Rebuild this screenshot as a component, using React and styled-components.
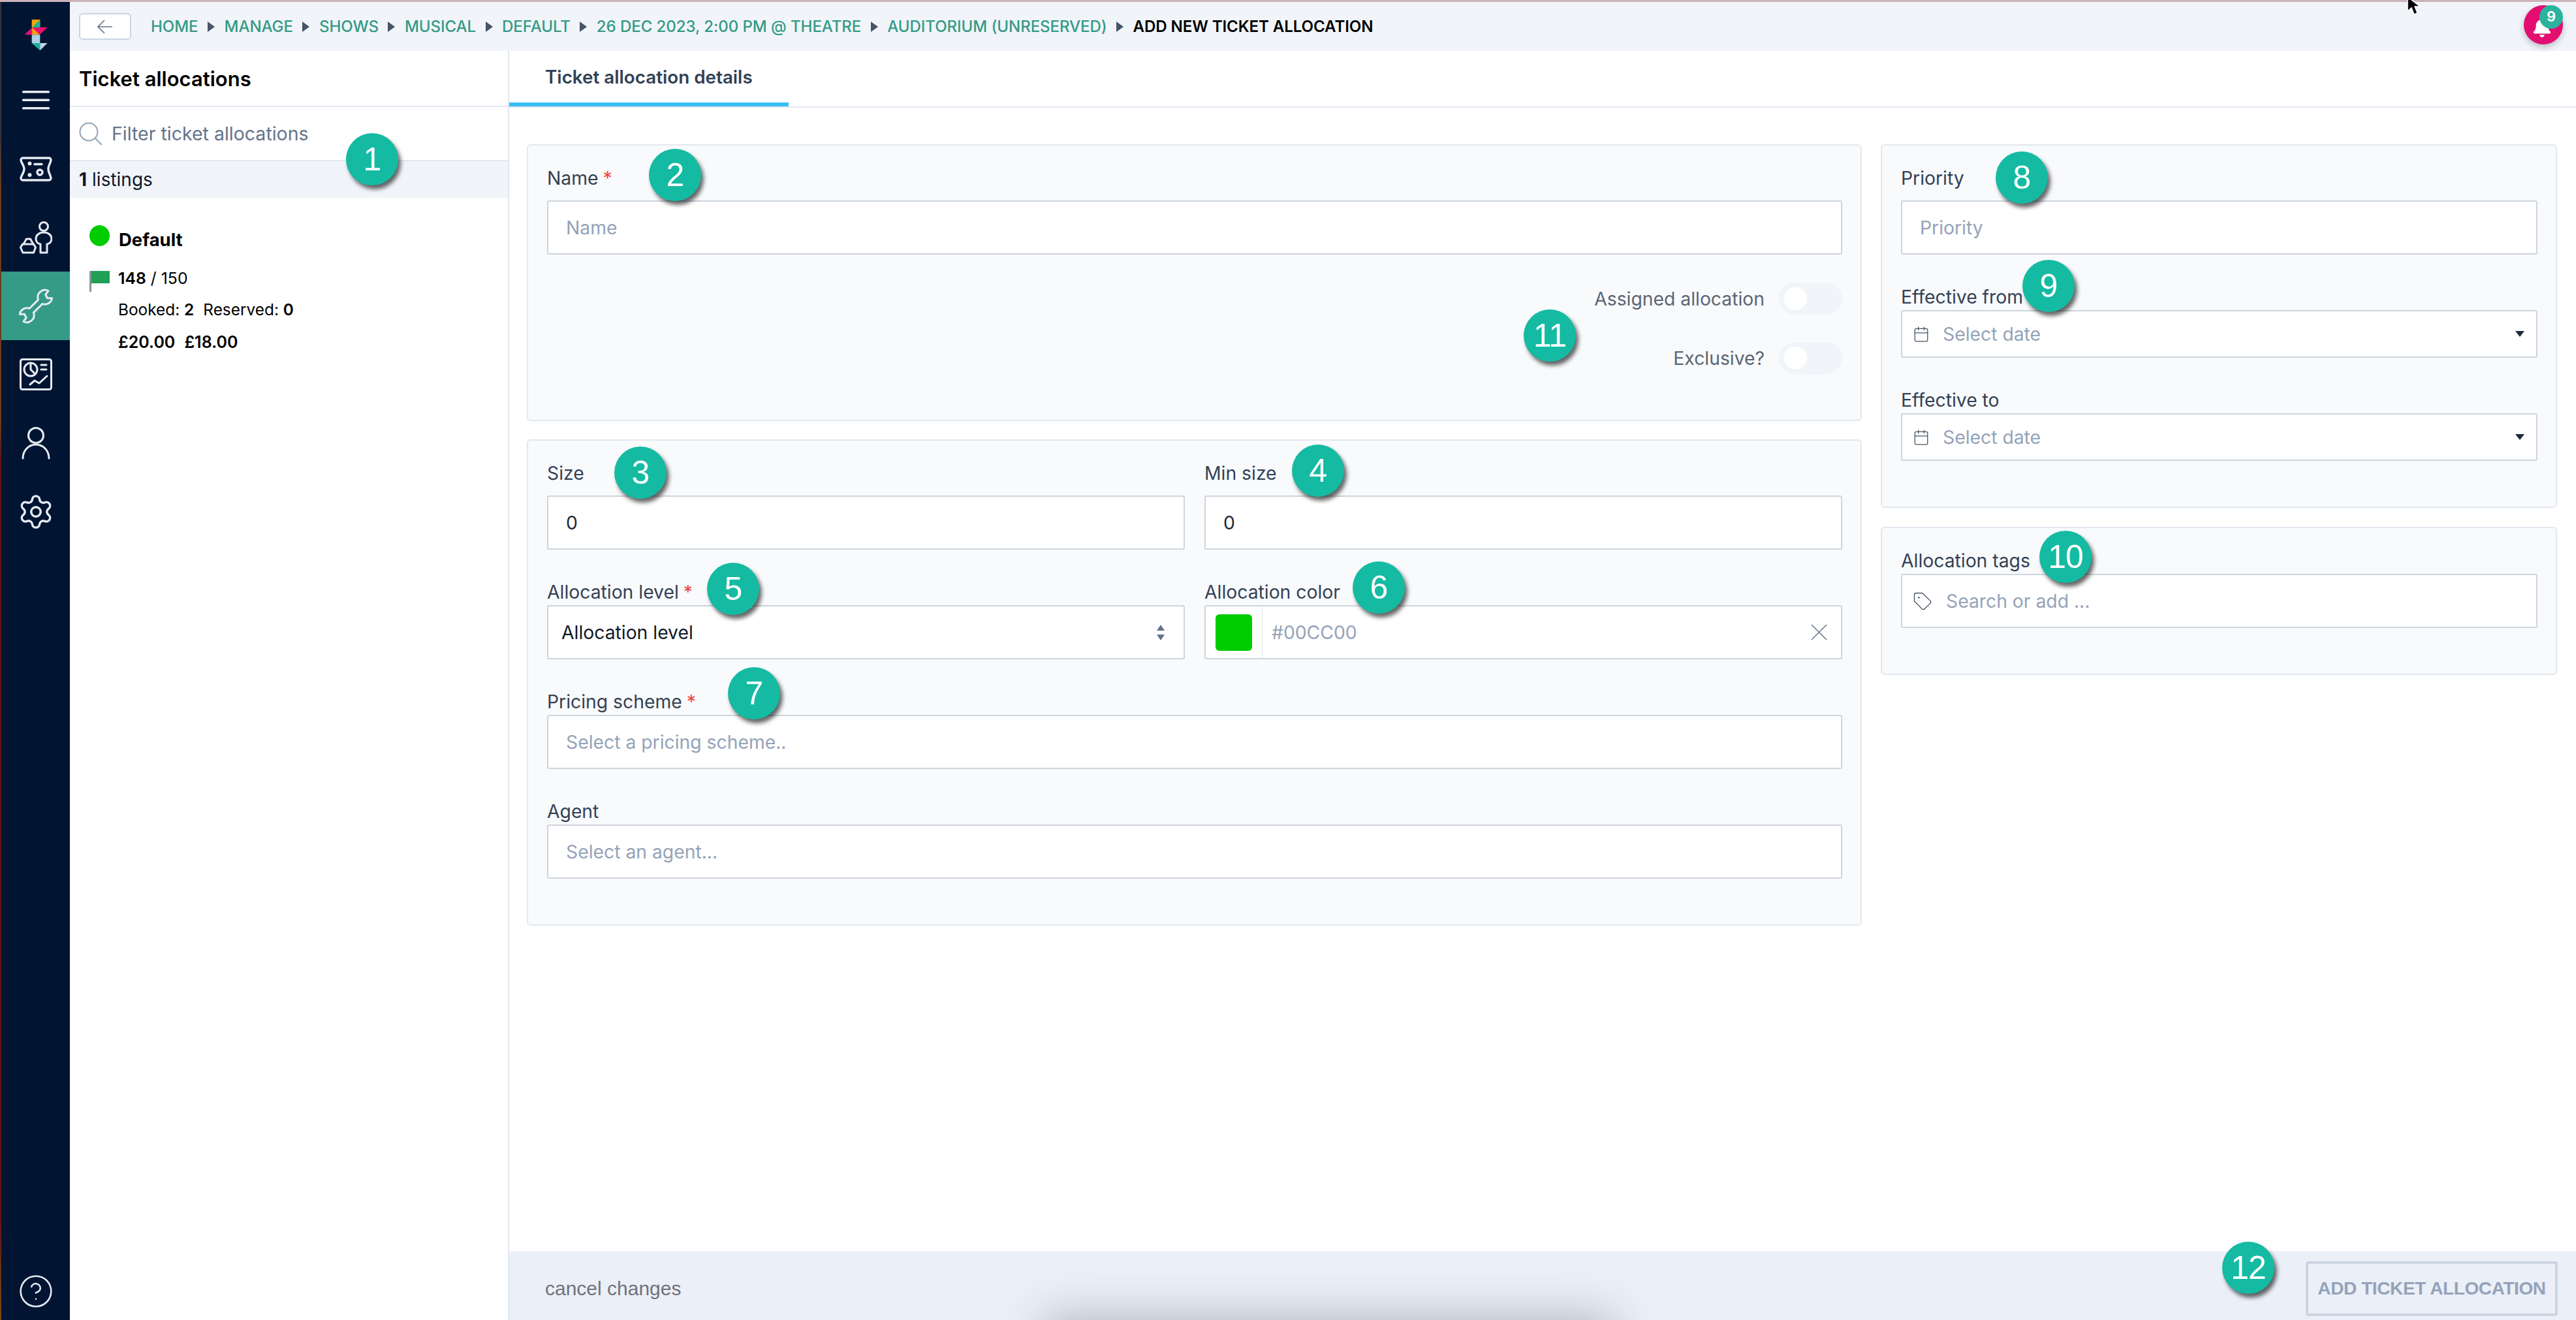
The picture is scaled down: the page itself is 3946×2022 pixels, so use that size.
import React from 'react';
import styled, { createGlobalStyle } from 'styled-components';
import { Settings, CircleHelp, Calendar, Tag } from 'lucide-react';
import { FaBell } from 'react-icons/fa';

const GlobalStyle = createGlobalStyle`
  html, body, #root {
    margin: 0;
    height: 100%;
  }
  body {
    overflow: hidden;
    background: #fff;
    font-family: Inter, "Liberation Sans", sans-serif;
  }
  * {
    box-sizing: border-box;
  }
`;

const Shell = styled.div`
  position: relative;
  display: flex;
  flex-direction: column;
  width: 3946px;
  height: 2022px;
  overflow: hidden;
`;

const TopEdge = styled.div`
  flex: 0 0 3px;
  background: #ccb2b9;
`;

const Workspace = styled.div`
  flex: 1;
  display: flex;
  min-height: 0;
`;

const Stripe = styled.div`
  flex: 0 0 2px;
  background: linear-gradient(#37343a 0%, #37343a 10%, #6b3a1c 14%, #6b3a1c 32%, #5e1414 35%, #5e1414 92%, #7a4a14 100%);
`;

const Sidebar = styled.nav`
  flex: 0 0 105px;
  display: flex;
  flex-direction: column;
  padding-bottom: 16px;
  background: #011432;
  color: #e5ebf3;
`;

const LogoSlot = styled.div`
  flex: 0 0 98px;
  display: flex;
  padding: 17px 0 0 8px;
`;

const NavItem = styled.div`
  flex: 0 0 105px;
  display: flex;
  align-items: center;
  justify-content: center;
  background: ${p => (p.$active ? '#359a86' : 'transparent')};
`;

const HelpItem = styled.div`
  margin-top: auto;
  display: flex;
  justify-content: center;
`;

const Main = styled.div`
  flex: 1;
  display: flex;
  flex-direction: column;
  min-width: 0;
`;

const Header = styled.header`
  flex: 0 0 75px;
  display: flex;
  align-items: center;
  padding: 0 20px 0 14px;
  background: #f1f5f9;
`;

const BackButton = styled.button`
  flex: 0 0 80px;
  height: 41px;
  margin-right: 30px;
  padding: 0;
  display: flex;
  align-items: center;
  justify-content: center;
  background: #fff;
  border: 2px solid #cbd5e1;
  border-radius: 6px;
  color: #64748b;
`;

const Crumbs = styled.div`
  display: flex;
  align-items: center;
  gap: 14.5px;
  font-size: 24.1px;
  font-weight: 500;
  letter-spacing: -0.1px;
  white-space: nowrap;
`;

const Crumb = styled.span`
  color: ${p => (p.$current ? '#000' : '#359a86')};
  font-weight: ${p => (p.$current ? 600 : 500)};
`;

const CrumbArrow = styled.i`
  width: 0;
  height: 0;
  border-left: 11px solid #475569;
  border-top: 8.5px solid transparent;
  border-bottom: 8.5px solid transparent;
`;

const BellButton = styled.div`
  position: relative;
  margin-left: auto;
  margin-bottom: 6px;
  width: 60px;
  height: 60px;
  display: flex;
  align-items: center;
  justify-content: center;
  padding: 8px 4px 0 0;
  border-radius: 50%;
  background: #e30e6f;
  color: #fff;
  box-shadow: 0 4px 10px rgba(15, 23, 42, 0.25);
`;

const BellCount = styled.span`
  position: absolute;
  top: 0;
  right: 0;
  width: 36px;
  height: 36px;
  display: flex;
  align-items: center;
  justify-content: center;
  border-radius: 50%;
  background: #2bb39e;
  font-size: 21px;
  font-weight: 700;
`;

const Body = styled.div`
  flex: 1;
  display: flex;
  min-height: 0;
`;

const ListPanel = styled.aside`
  flex: 0 0 673px;
  display: flex;
  flex-direction: column;
  border-right: 2px solid #e2e8f0;
`;

const PanelTitle = styled.h2`
  flex: 0 0 86px;
  margin: 0;
  padding: 0 0 0 14px;
  display: flex;
  align-items: center;
  border-bottom: 2px solid #e2e8f0;
  font-size: 31px;
  font-weight: 600;
  color: #000;
`;

const FilterRow = styled.div`
  flex: 0 0 83px;
  display: flex;
  align-items: center;
  gap: 14px;
  padding: 0 0 0 14px;
  border-bottom: 2px solid #e2e8f0;
  font-size: 28.5px;
  color: #64748b;
`;

const ListingCount = styled.div`
  flex: 0 0 56px;
  display: flex;
  align-items: center;
  padding-left: 14px;
  background: #f1f5f9;
  font-size: 28px;
  color: #0f172a;
  b {
    font-weight: 700;
    margin-right: 8px;
  }
`;

const Listing = styled.div`
  padding: 42px 0 0 30px;
  color: #000;
`;

const ListingHead = styled.div`
  display: flex;
  height: 44px;
  gap: 14px;
  font-size: 27.5px;
  font-weight: 700;
  line-height: 44px;
`;

const Dot = styled.i`
  flex: 0 0 31px;
  height: 32px;
  border-radius: 50%;
  background: #00cc00;
`;

const StatRow = styled.div`
  display: flex;
  gap: 13px;
  height: 32px;
  margin-top: 26px;
  font-size: 24.8px;
  line-height: 22px;
  b {
    font-weight: 600;
  }
`;

const Flag = styled.i`
  position: relative;
  flex: 0 0 31px;
  height: 32px;
  border-left: 3px solid #8c9196;
  &::after {
    content: '';
    position: absolute;
    left: 0;
    top: 0;
    width: 28px;
    height: 19px;
    background: #1fa055;
  }
`;

const Detail = styled.div`
  display: flex;
  gap: 14px;
  margin: ${p => p.$gap}px 0 0 44px;
  font-size: ${p => (p.$money ? 25 : 24.4)}px;
  line-height: 30px;
  font-weight: ${p => (p.$money ? 600 : 400)};
  b {
    font-weight: 600;
  }
`;

const Content = styled.main`
  flex: 1;
  display: flex;
  flex-direction: column;
  min-width: 0;
`;

const TabBar = styled.div`
  flex: 0 0 87px;
  display: flex;
  border-bottom: 2px solid #e2e8f0;
`;

const Tab = styled.div`
  display: flex;
  align-items: center;
  padding: 0 55px;
  border-bottom: 6px solid #38bdf8;
  font-size: 27.8px;
  font-weight: 600;
  color: #334155;
`;

const Columns = styled.div`
  flex: 1;
  display: grid;
  grid-template-columns: 2045px 1036px;
  gap: 29px;
  align-items: start;
  padding: 56px 29px 0 27px;
  min-height: 0;
`;

const Stack = styled.div`
  display: flex;
  flex-direction: column;
  gap: ${p => p.$gap}px;
`;

const Card = styled.section`
  display: flex;
  flex-direction: column;
  gap: 47px;
  padding: 32px 28px 70px 29px;
  background: #f8fafc;
  border: 2px solid #e2e8f0;
  border-radius: 6px;
`;

const Field = styled.div`
  display: flex;
  flex-direction: column;
`;

const Label = styled.label`
  height: 36px;
  margin-bottom: ${p => (p.$tight ? 2 : 16)}px;
  font-size: 28.3px;
  line-height: 36px;
  color: #334155;
`;

const Required = styled.span`
  margin-left: 7px;
  color: #ef4444;
`;

const Box = styled.div`
  height: ${p => p.$height || 83}px;
  display: flex;
  align-items: center;
  padding: 0 27px;
  background: #fff;
  border: 2px solid #cfd5dd;
  border-radius: 3px;
  font-size: 28.3px;
  color: ${p => (p.$value ? '#1e293b' : '#94a3b8')};
`;

const SelectBox = styled(Box)`
  justify-content: space-between;
  padding: 0 28px 0 20px;
  color: #111827;
`;

const DateBox = styled(Box)`
  gap: 20px;
  padding: 0 18px 0 16px;
  color: #94a3b8;
  svg {
    color: #475569;
  }
`;

const Caret = styled.i`
  margin-left: auto;
  width: 0;
  height: 0;
  border-top: 9px solid #1e293b;
  border-left: 7px solid transparent;
  border-right: 7px solid transparent;
`;

const TagBox = styled(Box)`
  gap: 21px;
  padding: 0 0 0 16px;
  svg {
    color: #475569;
  }
`;

const ColorBox = styled(Box)`
  padding: 0;
`;

const SwatchCell = styled.div`
  align-self: stretch;
  flex: 0 0 87px;
  display: flex;
  align-items: center;
  justify-content: center;
  border-right: 1px solid #e2e8f0;
`;

const Swatch = styled.i`
  width: 56px;
  height: 56px;
  border-radius: 6px;
  background: #00cc00;
`;

const ColorText = styled.span`
  flex: 1;
  padding-left: 14px;
`;

const ClearIcon = styled.svg`
  margin-right: 21px;
  color: #64748b;
`;

const TwoUp = styled.div`
  display: grid;
  grid-template-columns: 1fr 1fr;
  gap: 30px;
`;

const Toggles = styled.div`
  display: flex;
  flex-direction: column;
  gap: 42px;
  margin-top: -4px;
`;

const ToggleRow = styled.div`
  display: flex;
  align-items: center;
  justify-content: flex-end;
  gap: 22px;
  font-size: 28.3px;
  color: #5b6573;
`;

const Toggle = styled.div`
  width: 97px;
  height: 49px;
  padding: 7px 8px;
  border-radius: 25px;
  background: #f1f5f9;
  &::before {
    content: '';
    display: block;
    width: 35px;
    height: 35px;
    border-radius: 50%;
    background: #fff;
  }
`;

const Footer = styled.footer`
  flex: 0 0 106px;
  display: flex;
  justify-content: space-between;
  padding: 14px 28px 6px 55px;
  background: #ebeff8;
  border-top: 2px solid #f1f5f9;
`;

const CancelLink = styled.a`
  align-self: center;
  font-family: "Liberation Sans", sans-serif;
  font-size: 30px;
  color: #71717a;
`;

const SubmitButton = styled.button`
  width: 386px;
  padding: 0;
  background: transparent;
  border: 4px solid #cbd5e1;
  border-radius: 4px;
  font-family: "Liberation Sans", sans-serif;
  font-size: 28px;
  font-weight: 700;
  letter-spacing: -0.4px;
  color: #94a3b8;
`;

const Marker = styled.div`
  position: absolute;
  left: ${p => p.$x - 40}px;
  top: ${p => p.$y - 40}px;
  width: 80px;
  height: 80px;
  display: flex;
  align-items: center;
  justify-content: center;
  border-radius: 50%;
  background: #14bba2;
  box-shadow: 4px 6px 6px rgba(0, 0, 0, 0.6);
  font-family: "Liberation Sans", sans-serif;
  font-size: 50px;
  letter-spacing: -1px;
  color: #fff;
`;

const Pointer = styled.svg`
  position: absolute;
  left: 3686px;
  top: -6px;
`;

const ToastShadow = styled.div`
  position: absolute;
  left: 1620px;
  top: 2040px;
  width: 830px;
  height: 60px;
  box-shadow: 0 0 70px 20px rgba(30, 41, 59, 0.3);
`;

const markers = [
  [1, 570, 244], [2, 1034, 268], [3, 981, 724], [4, 2019, 721],
  [5, 1123, 902], [6, 2112, 900], [7, 1155, 1062], [8, 3097, 272],
  [9, 3138, 438], [10, 3164, 853], [11, 2374, 514], [12, 3444, 1942],
];

const crumbs = ['HOME', 'MANAGE', 'SHOWS', 'MUSICAL', 'DEFAULT', '26 DEC 2023, 2:00 PM @ THEATRE', 'AUDITORIUM (UNRESERVED)'];

const Logo = () => (
  <svg width="80" height="80" viewBox="0 0 240 240">
    <path d="M116 30h38v38h-38z" fill="#f5a30c" />
    <path d="M154 30v38h-38z" fill="#17b497" />
    <path d="M118 66h70l-36 34H82z" fill="#e8106f" />
    <path d="M118 66v34h34z" fill="#f5a30c" />
    <path d="M116 100h38v38h-38z" fill="#aecfe4" />
    <path d="M116 138h38v34z" fill="#17b497" />
    <path d="M154 138h34l-34 34z" fill="#b9d8e8" />
  </svg>
);

const MenuIcon = () => (
  <svg width="42" height="30" viewBox="0 0 42 30" fill="currentColor">
    <rect y="0" width="42" height="3.4" rx="1.5" />
    <rect y="12.5" width="42" height="3.4" rx="1.5" />
    <rect y="25" width="42" height="3.4" rx="1.5" />
  </svg>
);

const TicketIcon = () => (
  <svg width="50" height="38" viewBox="0 0 50 38" fill="none" stroke="currentColor" strokeWidth="3.4" strokeLinecap="round">
    <path d="M5 2h40a3 3 0 0 1 3 3c0 4-4 8-4 14s4 10 4 14a3 3 0 0 1-3 3H5a3 3 0 0 1-3-3c0-4 5-8 5-14S2 9 2 5a3 3 0 0 1 3-3z" />
    <path d="M23 11.5h11" />
    <circle cx="31" cy="24" r="4" />
    <circle cx="15.5" cy="10.5" r="1.3" fill="currentColor" />
    <circle cx="15.5" cy="28" r="1.3" fill="currentColor" />
  </svg>
);

const ShopperIcon = () => (
  <svg width="50" height="50" viewBox="0 0 50 50" fill="none" stroke="currentColor" strokeWidth="3" strokeLinejoin="round" strokeLinecap="round">
    <circle cx="37" cy="8" r="6.5" />
    <path d="M32 48V35c-5-1-7-5-7-8 0-6 5-10 12-10s12 4 12 10c0 3-2 7-7 8v13z" />
    <path d="M1.500 40l3-5h17l3 5-3 8H5z" />
    <path d="M6 35l4.500-8h6l4.500 8" />
  </svg>
);

const WrenchIcon = () => (
  <svg width="68" height="68" viewBox="-10 -10 68 68" fill="none" stroke="currentColor" strokeWidth="3" strokeLinejoin="round">
    <g transform="rotate(-45 24 24)">
      <path d="M14.5 19.5H33.5A11 11 0 0 1 54 20.8L47 21.9L45.1 27.6L50.1 32.8A11 11 0 0 1 33.5 28.5H14.5A11 11 0 0 1-6 27.2L1 26.1L2.9 20.4L-2.1 15.2A11 11 0 0 1 14.5 19.5Z" />
    </g>
  </svg>
);

const ReportIcon = () => (
  <svg width="50" height="49" viewBox="0 0 50 49" fill="none" stroke="currentColor" strokeWidth="3" strokeLinejoin="round" strokeLinecap="round">
    <rect x="1.5" y="1.5" width="47" height="46" rx="3" />
    <circle cx="17" cy="17" r="10" />
    <path d="M17 7v10l7 7" />
    <path d="M33 10h8M33 17h8" />
    <path d="M16 40l7-6 7 4 12-11" />
  </svg>
);

const PersonIcon = () => (
  <svg width="44" height="50" viewBox="0 0 44 50" fill="none" stroke="currentColor" strokeWidth="3" strokeLinecap="round">
    <circle cx="22" cy="13" r="11.5" />
    <path d="M2 48c0-12 9-21 20-21s20 9 20 21" />
  </svg>
);

const SearchIcon = () => (
  <svg width="36" height="36" viewBox="0 0 36 36" fill="none" stroke="#94a3b8" strokeWidth="2">
    <circle cx="15" cy="15" r="13.5" />
    <path d="M24.5 24.5L35 35" />
  </svg>
);

const BackArrow = () => (
  <svg width="24" height="22" viewBox="0 0 24 22" fill="none" stroke="currentColor" strokeWidth="1.6">
    <path d="M23 11H1M11 1L1 11l10 10" />
  </svg>
);

const SortArrows = () => (
  <svg width="14" height="26" viewBox="0 0 14 26" fill="#64748b">
    <path d="M7 1l6 9H1zM7 25l-6-9h12z" />
  </svg>
);

const App = () => (
  <Shell>
    <GlobalStyle />
    <TopEdge />
    <Workspace>
      <Stripe />
      <Sidebar>
        <LogoSlot><Logo /></LogoSlot>
        <NavItem><MenuIcon /></NavItem>
        <NavItem><TicketIcon /></NavItem>
        <NavItem><ShopperIcon /></NavItem>
        <NavItem $active><WrenchIcon /></NavItem>
        <NavItem><ReportIcon /></NavItem>
        <NavItem><PersonIcon /></NavItem>
        <NavItem><Settings size={58} strokeWidth={1.4} /></NavItem>
        <HelpItem><CircleHelp size={56} strokeWidth={1.1} /></HelpItem>
      </Sidebar>
      <Main>
        <Header>
          <BackButton><BackArrow /></BackButton>
          <Crumbs>
            {crumbs.map(c => (
              <React.Fragment key={c}>
                <Crumb>{c}</Crumb>
                <CrumbArrow />
              </React.Fragment>
            ))}
            <Crumb $current>ADD NEW TICKET ALLOCATION</Crumb>
          </Crumbs>
          <BellButton>
            <FaBell size={30} />
            <BellCount>9</BellCount>
          </BellButton>
        </Header>
        <Body>
          <ListPanel>
            <PanelTitle>Ticket allocations</PanelTitle>
            <FilterRow>
              <SearchIcon />
              Filter ticket allocations
            </FilterRow>
            <ListingCount><b>1</b> listings</ListingCount>
            <Listing>
              <ListingHead><Dot />Default</ListingHead>
              <StatRow><Flag /><span><b>148</b> / 150</span></StatRow>
              <Detail $gap={12}>
                <span>Booked: <b>2</b></span>
                <span>Reserved: <b>0</b></span>
              </Detail>
              <Detail $gap={20} $money>
                <span>£20.00</span>
                <span>£18.00</span>
              </Detail>
            </Listing>
          </ListPanel>
          <Content>
            <TabBar><Tab>Ticket allocation details</Tab></TabBar>
            <Columns>
              <Stack $gap={28}>
                <Card>
                  <Field>
                    <Label>Name<Required>*</Required></Label>
                    <Box>Name</Box>
                  </Field>
                  <Toggles>
                    <ToggleRow>Assigned allocation<Toggle /></ToggleRow>
                    <ToggleRow>Exclusive?<Toggle /></ToggleRow>
                  </Toggles>
                </Card>
                <Card>
                  <TwoUp>
                    <Field>
                      <Label>Size</Label>
                      <Box $value>0</Box>
                    </Field>
                    <Field>
                      <Label>Min size</Label>
                      <Box $value>0</Box>
                    </Field>
                  </TwoUp>
                  <TwoUp>
                    <Field>
                      <Label $tight>Allocation level<Required>*</Required></Label>
                      <SelectBox>Allocation level<SortArrows /></SelectBox>
                    </Field>
                    <Field>
                      <Label $tight>Allocation color</Label>
                      <ColorBox>
                        <SwatchCell><Swatch /></SwatchCell>
                        <ColorText>#00CC00</ColorText>
                        <ClearIcon width="25" height="25" viewBox="0 0 25 25" fill="none" stroke="currentColor" strokeWidth="1.5">
                          <path d="M1 1l23 23M24 1L1 24" />
                        </ClearIcon>
                      </ColorBox>
                    </Field>
                  </TwoUp>
                  <Field>
                    <Label $tight>Pricing scheme<Required>*</Required></Label>
                    <Box>Select a pricing scheme..</Box>
                  </Field>
                  <Field>
                    <Label $tight>Agent</Label>
                    <Box>Select an agent...</Box>
                  </Field>
                </Card>
              </Stack>
              <Stack $gap={29}>
                <Card>
                  <Field>
                    <Label>Priority</Label>
                    <Box>Priority</Box>
                  </Field>
                  <Field>
                    <Label $tight>Effective from</Label>
                    <DateBox $height={73}><Calendar size={26} strokeWidth={1.2} />Select date<Caret /></DateBox>
                  </Field>
                  <Field>
                    <Label $tight>Effective to</Label>
                    <DateBox $height={73}><Calendar size={26} strokeWidth={1.2} />Select date<Caret /></DateBox>
                  </Field>
                </Card>
                <Card>
                  <Field>
                    <Label $tight>Allocation tags</Label>
                    <TagBox><Tag size={30} strokeWidth={1.1} />Search or add ...</TagBox>
                  </Field>
                </Card>
              </Stack>
            </Columns>
            <Footer>
              <CancelLink>cancel changes</CancelLink>
              <SubmitButton>ADD TICKET ALLOCATION</SubmitButton>
            </Footer>
          </Content>
        </Body>
      </Main>
    </Workspace>
    <ToastShadow />
    {markers.map(([n, x, y]) => <Marker key={n} $x={x} $y={y}>{n}</Marker>)}
    <Pointer width="26" height="30" viewBox="0 0 26 30">
      <path d="M2 1v22l6-5 4 10 5-2-4-10h8z" fill="#000" stroke="#fff" strokeWidth="1.5" />
    </Pointer>
  </Shell>
);

export default App;
